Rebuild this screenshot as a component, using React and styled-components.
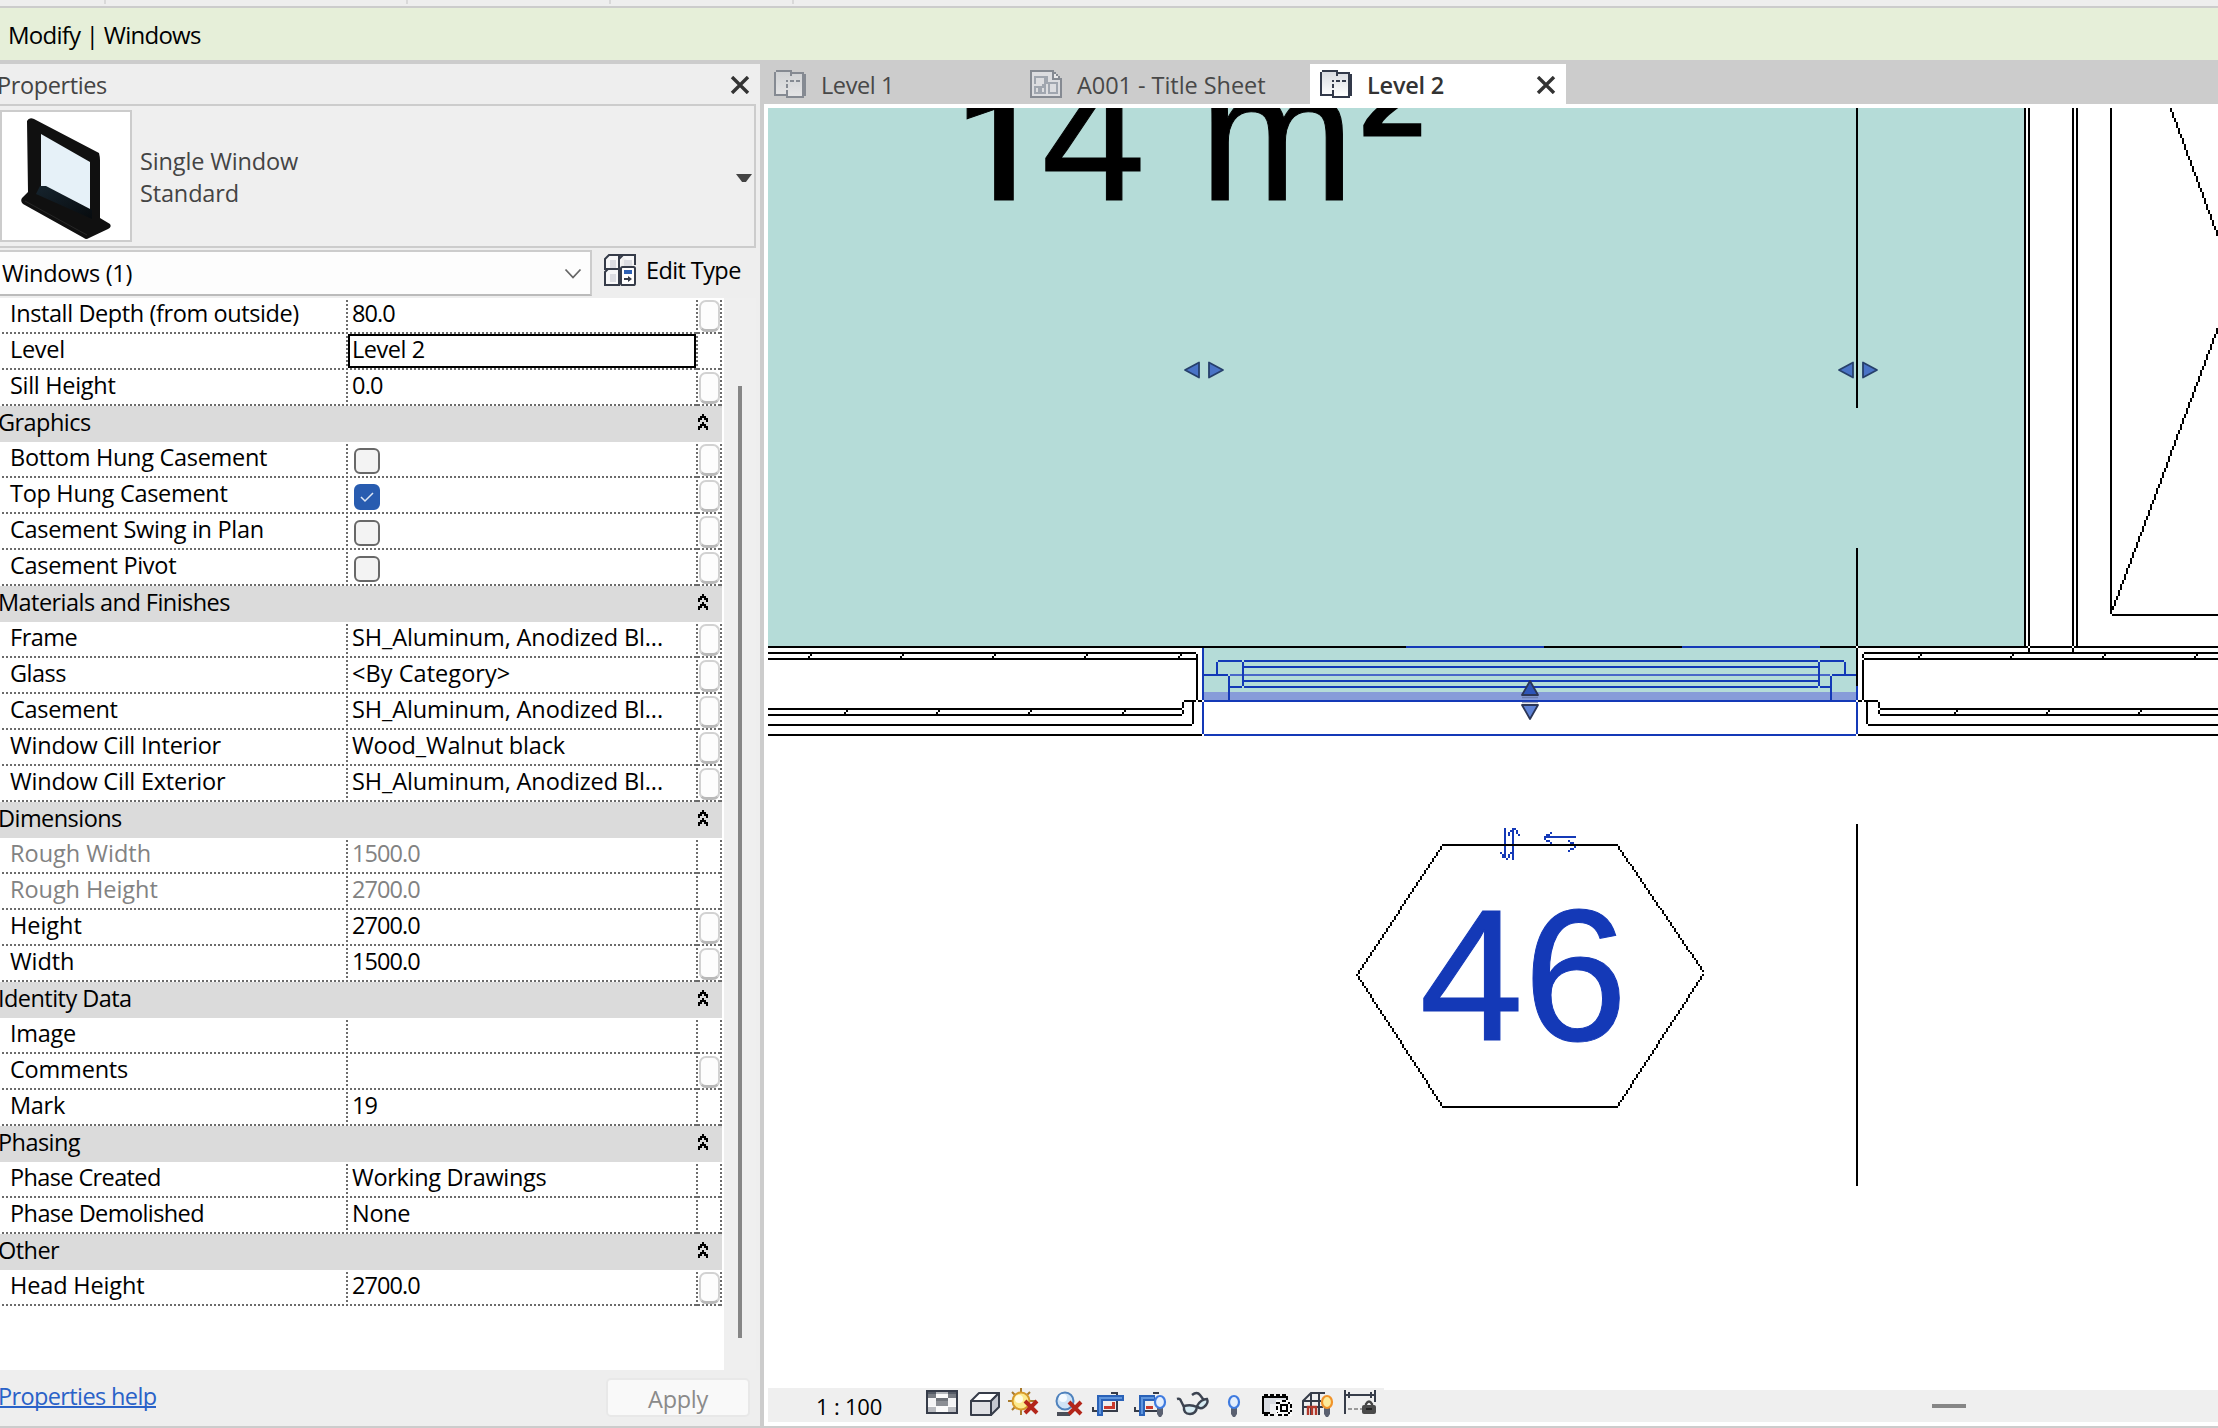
import React from "react";
import styled, { createGlobalStyle, css } from "styled-components";

const Global = createGlobalStyle`
  * { box-sizing: border-box; }
  html, body { margin: 0; padding: 0; }
  body {
    width: 2218px; height: 1428px; overflow: hidden; background: #fff;
    font-family: "Open Sans", "Noto Sans", sans-serif;
    font-size: 23.5px; color: #000; letter-spacing: -0.3px;
  }
`;

const INK = "#363c49";
const BLUE = "#1439b7";
const TEAL = "#b5dcd8";

/* ---------- shell ---------- */
const Shell = styled.div`
  width: 2218px; height: 1428px; display: flex; flex-direction: column;
  border-bottom: 2px solid #ccc;
`;
const RibbonEdge = styled.div`
  height: 8px; flex: none; background: #eee; border-bottom: 2px solid #ccc; display: flex;
`;
const RibbonGroup = styled.div`
  width: ${(p) => p.$w}px; height: 4px; border-right: 2px solid #d9d9d9;
`;
const ContextBar = styled.div`
  height: 56px; flex: none; background: #e6efd9; border-bottom: 4px solid #ccc;
  padding-left: 8px; line-height: 54px; white-space: pre; font-size: 24px;
  letter-spacing: -0.75px;
`;
const Body = styled.div`
  flex: 1; min-height: 0; display: flex;
`;

/* ---------- properties panel ---------- */
const Panel = styled.div`
  width: 764px; flex: none; background: #eee; border-right: 4px solid #ccc;
  display: flex; flex-direction: column; overflow: hidden;
`;
const PanelTitle = styled.div`
  height: 40px; flex: none; display: flex; justify-content: space-between;
  padding-right: 10px; line-height: 42px; color: #444; letter-spacing: -0.4px;
  span { margin-left: -3px; }
  svg { margin-top: 12px; }
`;
const TypeSelector = styled.div`
  height: 144px; width: 756px; flex: none; display: flex; align-items: center;
  border: 2px solid #ccc; border-left: 0; background: #efefef; color: #444;
`;
const Thumb = styled.div`
  width: 132px; height: 132px; border: 2px solid #ccc; background: #fff; margin-top: -1px;
`;
const TypeNames = styled.div`
  flex: 1; margin: 2px 0 0 8px; line-height: 32px; letter-spacing: -0.15px;
`;
const DropArrow = styled.div`
  width: 16px; height: 8px; margin: 4px 2px 0 0; background: #444;
  clip-path: polygon(0 0, 100% 0, 62% 100%, 38% 100%);
`;
const FilterRow = styled.div`
  height: 50px; flex: none; display: flex; padding: 2px 0;
`;
const Combo = styled.div`
  width: 592px; height: 46px; background: #fdfdfd; border: 2px solid #ccc;
  border-left: 0; border-bottom-color: #bbb; display: flex; justify-content: space-between;
  padding: 0 8px 0 2px; line-height: 43px;
  svg { margin-top: 16px; }
`;
const EditType = styled.div`
  display: flex; margin-left: 12px; line-height: 40px; gap: 10px; letter-spacing: -0.6px;
  svg { margin-top: 4px; }
`;
const GridWrap = styled.div`
  flex: none; height: 1072px; display: flex;
`;
const Grid = styled.div`
  width: 724px; background: #fff;
`;
const ScrollTrack = styled.div`
  width: 32px; background: #efefef; padding: 88px 14px 0;
`;
const ScrollThumb = styled.div`
  width: 4px; height: 952px; background: #868686;
`;
const Section = styled.div`
  height: 36px; width: 722px; background: #dbdbdb; display: flex; justify-content: space-between;
  line-height: 33px; padding: 0 14px 0 0;
  span { margin-left: -2px; letter-spacing: -0.55px; }
  svg { margin-top: 8px; }
`;
const dotsX = "repeating-linear-gradient(90deg, transparent 0 2px, #6b6b6b 2px 4px)";
const dotsY = "repeating-linear-gradient(180deg, transparent 0 2px, #6b6b6b 2px 4px)";
const Row = styled.div`
  height: 36px; width: 722px; display: grid; grid-template-columns: 348px 350px 24px;
  line-height: 30px; white-space: pre;
  background: ${dotsX} 0 100% / 100% 2px no-repeat;
  color: ${(p) => (p.$dim ? "#828282" : "#000")};
`;
const Cell = styled.div`
  height: 36px; background: ${dotsY} 100% 0 / 2px 100% no-repeat;
  ${(p) => p.$name && css`padding-left: 10px;`}
  ${(p) => p.$value && css`padding-left: 4px;`}
  ${(p) => p.$tail && css`padding: 2px 2px 0 1px;`}
  letter-spacing: ${(p) => p.$ls ?? -0.3}px;
`;
const Selected = styled.div`
  width: 348px; height: 34px; margin-left: -4px; border: 2px solid #000; background: #fff;
  padding-left: 2px; line-height: 26px;
`;
const AssocButton = styled.div`
  width: 21px; height: 32px; border: 2px solid #d2d2d2; border-bottom: 3px solid #b9b9b9;
  border-radius: 7px; background: #fdfdfd;
`;
const Check = styled.div`
  width: 26px; height: 26px; margin: 6px 0 0 2px; border-radius: 6px;
  border: 2px solid ${(p) => (p.$on ? "#285cb0" : "#686868")};
  background: ${(p) => (p.$on ? "#285cb0" : "#f3f3f3")};
  display: flex; align-items: center; justify-content: center;
`;
const Footer = styled.div`
  flex: 1; display: flex; justify-content: space-between; padding: 8px 10px 0 0;
`;
const HelpLink = styled.div`
  margin-left: -2px; height: 30px; line-height: 36px; color: #2a62c8;
  border-bottom: 2px solid #2a62c8; letter-spacing: -0.62px;
`;
const Apply = styled.div`
  width: 144px; height: 39px; border: 2px solid #e8e8e8; border-radius: 5px; background: #f9f9f9;
  color: #8a8a8a; text-align: center; line-height: 38px;
`;

/* ---------- document area ---------- */
const Doc = styled.div`
  flex: 1; min-width: 0; display: flex; flex-direction: column;
`;
const Tabs = styled.div`
  height: 40px; flex: none; background: #ccc; display: flex;
`;
const Tab = styled.div`
  width: ${(p) => p.$w}px; display: flex; line-height: 42px; padding-left: 10px;
  color: ${(p) => (p.$active ? "#333" : "#484848")};
  background: ${(p) => (p.$active ? "#fff" : "transparent")};
  font-weight: ${(p) => (p.$active ? 600 : 400)};
  letter-spacing: ${(p) => p.$ls}px;
  span { margin-left: 15px; flex: 1; white-space: pre; }
  svg { margin-top: 6px; flex: none; }
`;
const TabClose = styled.div`
  padding: 6px 10px 0 0; display: flex;
`;
const View = styled.div`
  height: 1284px; flex: none; padding: 4px 0 0 4px; background: #fff;
  svg { display: block; }
`;
const StatusRow = styled.div`
  height: 34px; flex: none; padding-left: 4px; display: flex; align-items: flex-end;
`;
const ViewBar = styled.div`
  width: 616px; height: 34px; background: #efefef; display: flex;
  svg { display: block; flex: none; }
`;
const Scale = styled.div`
  width: 153px; padding-left: 48px; line-height: 36px; font-size: 22px; white-space: pre;
  letter-spacing: -0.2px;
`;
const HScroll = styled.div`
  flex: 1; height: 32px; background: #efefef; padding: 14px 0 0 548px;
`;
const HThumb = styled.div`
  width: 34px; height: 4px; background: #868686;
`;

/* ---------- small icons ---------- */
const CloseX = () => (
  <svg width="20" height="18" viewBox="0 0 20 18">
    <path d="M2 1 18 17M18 1 2 17" stroke="#333" strokeWidth="3.4" />
  </svg>
);
const Collapse = () => (
  <svg width="10" height="16" viewBox="0 0 5 8" shapeRendering="crispEdges">
    {[0, 4].map((y) => (
      <path key={y} fill="#000"
        d={`M2 ${y}h1v1h1v1h1v2h-1v-1h-1v-1h-1v1h-1v1h-1v-2h1v-1h1z`} />
    ))}
  </svg>
);
const WindowThumb = () => (
  <svg width="128" height="128" viewBox="2 112 128 128">
    <defs>
      <linearGradient id="sill" x1="0" y1="0" x2="1" y2="1">
        <stop offset="0" stopColor="#16242e" />
        <stop offset="1" stopColor="#070b0e" />
      </linearGradient>
    </defs>
    <path d="M27 121Q29 117 34 119L99 153Q100 157 100 160V218L110 224Q112 227 108 229L89 238Q86 240 84 238L23 204Q20 201 22 198L28 192Z" fill="#101010" />
    <path d="M41 134 90 162V210L46 187 41 189Z" fill="#e6f1f8" />
    <path d="M40 186 46 186 92 210V219L36 194Z" fill="url(#sill)" />
    <path d="M25 201 87 235" stroke="#262626" strokeWidth="1" />
  </svg>
);
const EditTypeIcon = () => (
  <svg width="32" height="32" viewBox="0 0 16 16">
    <g fill="#f7f7f8" stroke={INK} strokeWidth="1">
      <path d="M.5 2.5 2.5.5H7.5V7.5H.5Z" />
      <path d="M7.5.5H15.5V5.5M8 7.5H7.5V2.5L9.500 .5" />
      <path d="M.5 9 2 7.500H7.500V15.500H.5Z" />
    </g>
    <path d="M3 3h3v4H3zM10 3h4v3h-4zM3 10h3v4H3z" fill="#dcdde2" />
    <rect x="8.500" y="6.500" width="7" height="9" rx=".8" fill="#fff" stroke={INK} />
    <path d="M10 8h4v2h-4z" fill="#2f62b5" />
    <path d="M10 12h2v-1l2 1.500-2 1.500v-1h-2z" fill={INK} />
  </svg>
);
const PlanIcon = ({ active }) => {
  const c = active ? "#33394a" : "#858a92";
  return (
    <svg width="32" height="28" viewBox="0 0 16 14" shapeRendering="crispEdges">
      <defs>
        <linearGradient id={active ? "pa" : "pi"} x1="0" y1="0" x2="0" y2="1">
          <stop offset="0" stopColor={active ? "#d9dbe0" : "#d0d2d4"} />
          <stop offset="1" stopColor={active ? "#ffffff" : "#e4e4e5"} />
        </linearGradient>
      </defs>
      <path d="M1 0h8v1h6v13H6v-1H0V1h1z" fill={c} />
      <path d="M1 1h7v1h6v11H7v-1H1z" fill={`url(#${active ? "pa" : "pi"})`} />
      <path d="M8 1h1v2H8zM6 5h1v1H6zM8 5h2v1H8zM11 5h2v1h-2zM6 7h1v2H6zM6 10h1v3H6zM14 2h2v1h-2zM15 3h1v10h-1z" fill={c} />
    </svg>
  );
};
const SheetIcon = () => (
  <svg width="32" height="28" viewBox="0 0 16 14" shapeRendering="crispEdges">
    <path d="M0 0h12v1h1v1h1v1h1v1h1v10H0z" fill="#858a92" />
    <path d="M1 1h10v4h4v8H1z" fill="#dcdde0" />
    <path d="M12 2h1v1h1v1h-2z" fill="#e9e9ea" />
    <path d="M2 3h7v3h5v6H9V7H8v5H2V8h4V7h1V4H3v3H2z" fill="#a0a6af" />
    <path d="M3 9h1v2H3zM10 7h3v4h-3zM6 9h1v2H6z" fill="#dcdde0" />
  </svg>
);

/* ---------- property data ---------- */
const alu = { v: "SH_Aluminum, Anodized Bl...", vls: -0.12, b: 1 };
const rows = [
  { n: "Install Depth (from outside)", ls: -0.4, v: "80.0", vls: -0.9, b: 1 },
  { n: "Level", v: "Level 2", vls: -0.45, sel: 1 },
  { n: "Sill Height", v: "0.0", vls: -0.8, b: 1 },
  { s: "Graphics" },
  { n: "Bottom Hung Casement", c: 0, b: 1 },
  { n: "Top Hung Casement", c: 1, b: 1 },
  { n: "Casement Swing in Plan", c: 0, b: 1 },
  { n: "Casement Pivot", c: 0, b: 1 },
  { s: "Materials and Finishes" },
  { n: "Frame", ls: -0.5, ...alu },
  { n: "Glass", ls: -0.5, v: "<By Category>", vls: 0.05, b: 1 },
  { n: "Casement", ...alu },
  { n: "Window Cill Interior", ls: -0.22, v: "Wood_Walnut black", vls: -0.15, b: 1 },
  { n: "Window Cill Exterior", ls: -0.22, ...alu },
  { s: "Dimensions" },
  { n: "Rough Width", ls: 0, v: "1500.0", vls: -0.95, dim: 1 },
  { n: "Rough Height", ls: -0.05, v: "2700.0", vls: -0.95, dim: 1 },
  { n: "Height", ls: -0.05, v: "2700.0", vls: -0.95, b: 1 },
  { n: "Width", ls: -0.1, v: "1500.0", vls: -0.95, b: 1 },
  { s: "Identity Data" },
  { n: "Image", v: "" },
  { n: "Comments", ls: -0.2, v: "", b: 1 },
  { n: "Mark", v: "19", vls: -0.9 },
  { s: "Phasing" },
  { n: "Phase Created", ls: -0.62, v: "Working Drawings" },
  { n: "Phase Demolished", ls: -0.58, v: "None" },
  { s: "Other" },
  { n: "Head Height", ls: -0.15, v: "2700.0", vls: -0.95, b: 1 },
];

function PropertyRow({ r }) {
  if (r.s) return <Section><span>{r.s}</span><Collapse /></Section>;
  return (
    <Row $dim={r.dim}>
      <Cell $name $ls={r.ls}>{r.n}</Cell>
      <Cell $value $ls={r.vls}>
        {r.sel ? <Selected>{r.v}</Selected> : r.v}
        {r.c !== undefined && (
          <Check $on={r.c}>
            {r.c === 1 && (
              <svg width="16" height="12" viewBox="0 0 16 12">
                <path d="M2 6 6 10 14 2" fill="none" stroke="#dfe8f5" strokeWidth="1.500" />
              </svg>
            )}
          </Check>
        )}
      </Cell>
      <Cell $tail>{r.b ? <AssocButton /> : null}</Cell>
    </Row>
  );
}

/* ---------- plan drawing ---------- */
// Stepped line on the drawing's 2px grid.
function stepped(x0, y0, x1, y1) {
  let [x, y, ex, ey] = [x0, y0, x1, y1].map((n) => Math.round(n / 2));
  const dx = Math.abs(ex - x), dy = -Math.abs(ey - y);
  const sx = x < ex ? 1 : -1, sy = y < ey ? 1 : -1;
  let err = dx + dy, d = "";
  for (;;) {
    d += `M${x * 2} ${y * 2}h2v2h-2z`;
    if (x === ex && y === ey) return d;
    const e2 = 2 * err;
    if (e2 >= dy) { err += dy; x += sx; }
    if (e2 <= dx) { err += dx; y += sy; }
  }
}
const H = (y, a, b) => `M${a} ${y}H${b}V${y + 2}H${a}z`;
const V = (x, a, b) => `M${x} ${a}V${b}H${x + 2}V${a}z`;
const tick = (y) => (x) => `M${x} ${y + 2}h2v2h-2zM${x + 2} ${y}h2v2h-2z`;

const walls = [
  H(646, 768, 2218),
  H(652, 768, 1198), H(658, 768, 1196), V(1196, 652, 702), H(700, 1184, 1202),
  H(708, 768, 1184), H(714, 768, 1184), V(1182, 702, 716), V(1192, 702, 726),
  H(724, 768, 1194), H(734, 768, 1202),
  V(2024, 108, 646), V(2028, 108, 652), V(2072, 108, 652), V(2076, 108, 646),
  V(2110, 108, 616), H(614, 2110, 2218),
  H(652, 1862, 2218), H(658, 1862, 2218), V(1862, 652, 700), H(700, 1858, 1862),
  H(700, 1864, 1880), V(1878, 700, 716), H(708, 1878, 2218), H(714, 1878, 2218),
  V(1866, 702, 726), H(724, 1866, 2218), H(734, 1858, 2218),
  V(1856, 108, 408), V(1856, 548, 686), V(1856, 824, 1186),
  stepped(2170, 108, 2218, 238), stepped(2112, 608, 2218, 324),
  H(844, 1442, 1618), H(1106, 1442, 1618),
  stepped(1442, 844, 1356, 974), stepped(1356, 974, 1442, 1106),
  stepped(1616, 844, 1702, 970), stepped(1702, 974, 1616, 1106),
  ...[808, 900, 992, 1084, 1178, 1918, 2010, 2102, 2194].map(tick(654)),
  ...[844, 936, 1028, 1122, 1954, 2046, 2138].map(tick(710)),
].join("");

const windowLines = [
  H(646, 1406, 1544), H(646, 1682, 1820),
  V(1202, 648, 736), H(700, 1202, 1858), H(734, 1202, 1858), V(1856, 686, 736),
  H(660, 1216, 1846), V(1216, 660, 674), V(1844, 660, 674),
  H(674, 1204, 1230), H(674, 1830, 1856), V(1228, 674, 700), V(1830, 674, 700),
  V(1242, 660, 688), V(1818, 660, 688),
  H(666, 1244, 1818), H(680, 1244, 1818), H(686, 1230, 1830),
  V(1504, 828, 860), V(1512, 828, 860), H(836, 1544, 1576),
  stepped(1510, 830, 1508, 834), stepped(1514, 828, 1518, 834),
  stepped(1500, 852, 1504, 858), stepped(1506, 858, 1510, 852),
  stepped(1544, 836, 1550, 832), stepped(1544, 838, 1550, 842),
  stepped(1568, 840, 1574, 844), stepped(1574, 846, 1568, 850),
].join("");

const SideGrip = ({ x, y }) => (
  <g transform={`translate(${x} ${y})`} fill="#4a74c6" stroke="#26406b" strokeWidth="1.8" strokeLinejoin="round">
    <path d="M-19 0-5-7.500V7.500Z" />
    <path d="M19 0 5-7.500V7.500Z" />
  </g>
);
const FlipGrip = ({ x, y }) => (
  <g transform={`translate(${x} ${y})`} stroke="#2b3658" strokeWidth="1.8" strokeLinejoin="round">
    <path d="M0-19-8-5H8Z" fill="#2e55b8" />
    <path d="M0 19-8 5H8Z" fill="#5f83d6" />
    <path d="M-8-2.500H8M-8 2.500H8" stroke="#5b6a94" strokeWidth="1.500" opacity=".6" />
  </g>
);
const DrawingText = styled.text`
  font-family: "Liberation Sans", Arial, sans-serif; font-size: 187px; letter-spacing: 0;
  stroke: currentColor; stroke-width: 1px;
  color: ${(p) => p.$ink}; fill: ${(p) => p.$ink};
`;
const PlainOne = styled.tspan`
  font-family: Roboto, sans-serif; font-weight: 500; font-size: 158px;
`;
const Squared = styled.tspan`
  stroke-width: 3px;
`;

const Plan = () => (
  <svg width="1450" height="1280" viewBox="768 108 1450 1280">
    <g shapeRendering="crispEdges">
      <rect x="768" y="108" width="1256" height="538" fill={TEAL} />
      <rect x="1204" y="648" width="652" height="44" fill={TEAL} />
      <rect x="1204" y="692" width="652" height="8" fill="#879cd9" />
      <path d={H(674, 1230, 1830)} fill="#4967c9" />
    </g>
    <DrawingText $ink="#000" y="200">
      <PlainOne x="954">1</PlainOne><tspan x="1041.500">4 </tspan><tspan x="1199">m</tspan><Squared x="1361" y="187">²</Squared>
    </DrawingText>
    <DrawingText $ink={BLUE} x="1419.500" y="1040">46</DrawingText>
    <g shapeRendering="crispEdges">
      <path d={walls} fill="#000" />
      <path d={windowLines} fill={BLUE} />
      <path d={H(844, 1490, 1590)} fill="#000" />
    </g>
    <SideGrip x={1204} y={370} />
    <SideGrip x={1858} y={370} />
    <FlipGrip x={1530} y={700} />
  </svg>
);

/* ---------- view control icons: one 42px cell each ---------- */
const redCross = (x, y) => (
  <path d={`M${x} ${y}l12 12m0-12l-12 12`} stroke="#b3261a" strokeWidth="4" />
);
const bulb = (x, y, glass = "#e4eefc", rim = "#3f7be0") => (
  <g>
    <path d={`M${x - 3} ${y + 6}h6v6l-2 3h-2l-2-3z`} fill="#5a6070" />
    <ellipse cx={x} cy={y} rx="5" ry="6" fill={glass} stroke={rim} strokeWidth="2.200" />
  </g>
);
const viewIcons = [
  <g shapeRendering="crispEdges">
    <path d="M926 1390h32v24h-32z" fill={INK} />
    <path d="M928 1392h28v20h-28z" fill="#fafafa" />
    <path d="M928 1392h8v2h-8zM948 1392h8v2h-8z" fill="#555b66" />
    <path d="M936 1392h12v2h-12z" fill="#b4b7bc" />
    <path d="M928 1394h8v4h-8zM948 1394h8v4h-8z" fill="#777b82" />
    <path d="M936 1398h12v8h-12z" fill="#8b8e94" />
    <path d="M936 1398h12v3h-12z" fill="#6f737a" />
    <path d="M928 1398h8v8h-8zM948 1398h8v8h-8z" fill="#f4f4f5" />
    <path d="M928 1407h8v5h-8zM948 1407h8v5h-8z" fill="#b9bbc0" />
  </g>,
  <g stroke={INK} strokeWidth="2" strokeLinejoin="round">
    <path d="M971 1401 979 1393H999L991 1401Z" fill="#fff" />
    <path d="M971 1401H991V1415H971Z" fill="#dfe0e4" />
    <path d="M991 1401 999 1393V1407L991 1415Z" fill="#c5c8d0" />
  </g>,
  <g>
    <path d="M1021 1388v27M1008 1401h27M1012 1392l18 18M1030 1392l-18 18" stroke="#a87a2c" strokeWidth="2" />
    <circle cx="1021" cy="1401" r="8.500" fill="#fce98c" stroke="#d79a2b" strokeWidth="2" />
    <circle cx="1019" cy="1399" r="4" fill="#fffbe0" />
    {redCross(1025, 1401)}
  </g>,
  <g>
    <circle cx="1065" cy="1401" r="8.500" fill="#cfe3f6" stroke="#4f82bd" strokeWidth="2" />
    <circle cx="1063" cy="1398" r="4" fill="#f5faff" />
    <path d="M1057 1412h13v4h-13z" fill="#4b4f59" />
    {redCross(1069, 1402)}
  </g>,
  <g fill="none" shapeRendering="crispEdges">
    <path d="M1111 1393h6v6M1093 1407v4h24v-12" stroke={INK} strokeWidth="2" />
    <path d="M1104 1407h9v-5" stroke="#c93a2c" strokeWidth="3" />
    <path d="M1100 1416v-18h24" stroke="#2a62b8" strokeWidth="6" />
    <path d="M1100 1414v-16h22" stroke="#5f95dc" strokeWidth="2" />
  </g>,
  <g fill="none">
    <g shapeRendering="crispEdges">
      <path d="M1153 1393h6M1135 1407v4h22" stroke={INK} strokeWidth="2" />
      <path d="M1146 1407h7" stroke="#c93a2c" strokeWidth="3" />
      <path d="M1142 1416v-18h13" stroke="#2a62b8" strokeWidth="6" />
      <path d="M1142 1414v-16h12" stroke="#5f95dc" strokeWidth="2" />
    </g>
    {bulb(1160, 1402)}
  </g>,
  <g fill="#d7ecf3" stroke="#3c4350" strokeWidth="2.400">
    <path d="M1177 1399q3-1 4 2l4 8M1192 1395q5-4 8 0l6 8" fill="none" />
    <path d="M1184 1406q-1 8 6 8 6 0 7-7-6-3-13-1Z" />
    <path d="M1197 1406q3 4 7 1 5-4 3-8-6 0-10 7Z" />
  </g>,
  bulb(1234, 1402),
  <g shapeRendering="crispEdges">
    <path d="M1264 1396h24v16h-24z" fill="#d9dce2" />
    <path d="M1270 1404h12v8h-12z" fill="#eff0f2" />
    <path d="M1262 1396h2v18h-2zM1264 1394h4v4h-4zM1268 1396h2v2h-2zM1270 1394h4v4h-4zM1274 1396h2v2h-2zM1276 1394h4v4h-4zM1280 1396h2v2h-2zM1282 1394h4v4h-4zM1264 1412h4v4h-4zM1268 1412h2v2h-2zM1270 1414h4v2h-4zM1286 1396h2v4h-2z" fill="#000" />
    <path d="M1276 1400h16v16h-16z" fill="#fafafa" />
    <path d="M1276 1402h4v2h-4zM1282 1400h4v2h-4zM1288 1402h2v2h-2zM1290 1404h2v4h-2zM1276 1406h2v4h-2zM1290 1410h2v2h-2zM1276 1412h2v4h4v-2h-4zM1284 1414h4v2h-4zM1288 1412h2v2h-2z" fill="#000" />
    <path d="M1280 1404h8v2h-8zM1280 1410h8v2h-8zM1280 1406h2v4h-2zM1286 1406h2v4h-2z" fill="#000" />
  </g>,
  <g>
    <path d="M1303 1415v-14l8-8h14M1303 1401h18M1311 1393v22M1319 1393v22M1303 1407h20" fill="none" stroke={INK} strokeWidth="2" />
    <path d="M1308 1415v-8h8v8M1312 1407v8" fill="none" stroke="#b3392b" strokeWidth="2.400" />
    {bulb(1327, 1402, "#fdeb9a", "#f0932a")}
  </g>,
  <g>
    <path d="M1345 1390v24M1375 1390v12M1345 1395h30M1349 1392v6M1371 1392v6" stroke={INK} strokeWidth="2" shapeRendering="crispEdges" />
    <path d="M1348 1409h4M1354 1409h4M1360 1409h3" stroke="#999" strokeWidth="2" />
    <path d="M1366 1406v-2q3-5 6 0v2" fill="none" stroke="#444" strokeWidth="2.400" />
    <rect x="1362" y="1405" width="14" height="9" rx="2" fill="#4a4a4a" />
    <path d="M1366 1409h6" stroke="#222" strokeWidth="2" />
  </g>,
];

export default function App() {
  return (
    <Shell>
      <Global />
      <RibbonEdge>
        <RibbonGroup $w={106} /><RibbonGroup $w={302} /><RibbonGroup $w={203} /><RibbonGroup $w={183} />
      </RibbonEdge>
      <ContextBar>Modify | Windows</ContextBar>
      <Body>
        <Panel>
          <PanelTitle><span>Properties</span><CloseX /></PanelTitle>
          <TypeSelector>
            <Thumb><WindowThumb /></Thumb>
            <TypeNames>
              <div>Single Window</div>
              <div>Standard</div>
            </TypeNames>
            <DropArrow />
          </TypeSelector>
          <FilterRow>
            <Combo>
              <span>Windows (1)</span>
              <svg width="18" height="12" viewBox="0 0 18 12">
                <path d="M1.500 1.500 9 9.500 16.500 1.500" fill="none" stroke="#666" strokeWidth="1.800" />
              </svg>
            </Combo>
            <EditType><EditTypeIcon /><span>Edit Type</span></EditType>
          </FilterRow>
          <GridWrap>
            <Grid>{rows.map((r, i) => <PropertyRow key={i} r={r} />)}</Grid>
            <ScrollTrack><ScrollThumb /></ScrollTrack>
          </GridWrap>
          <Footer>
            <HelpLink>Properties help</HelpLink>
            <Apply>Apply</Apply>
          </Footer>
        </Panel>
        <Doc>
          <Tabs>
            <Tab $w={256} $ls={-0.4}><PlanIcon /><span>Level 1</span></Tab>
            <Tab $w={290} $ls={-0.05}><SheetIcon /><span>A001 - Title Sheet</span></Tab>
            <Tab $w={256} $active $ls={-0.2}>
              <PlanIcon active /><span>Level 2</span><TabClose><CloseX /></TabClose>
            </Tab>
          </Tabs>
          <View><Plan /></View>
          <StatusRow>
            <ViewBar>
              <Scale>1 : 100</Scale>
              {viewIcons.map((icon, i) => (
                <svg key={i} width="42" height="34" viewBox={`${921 + 42 * i} 1388 42 34`}>{icon}</svg>
              ))}
            </ViewBar>
            <HScroll><HThumb /></HScroll>
          </StatusRow>
        </Doc>
      </Body>
    </Shell>
  );
}
